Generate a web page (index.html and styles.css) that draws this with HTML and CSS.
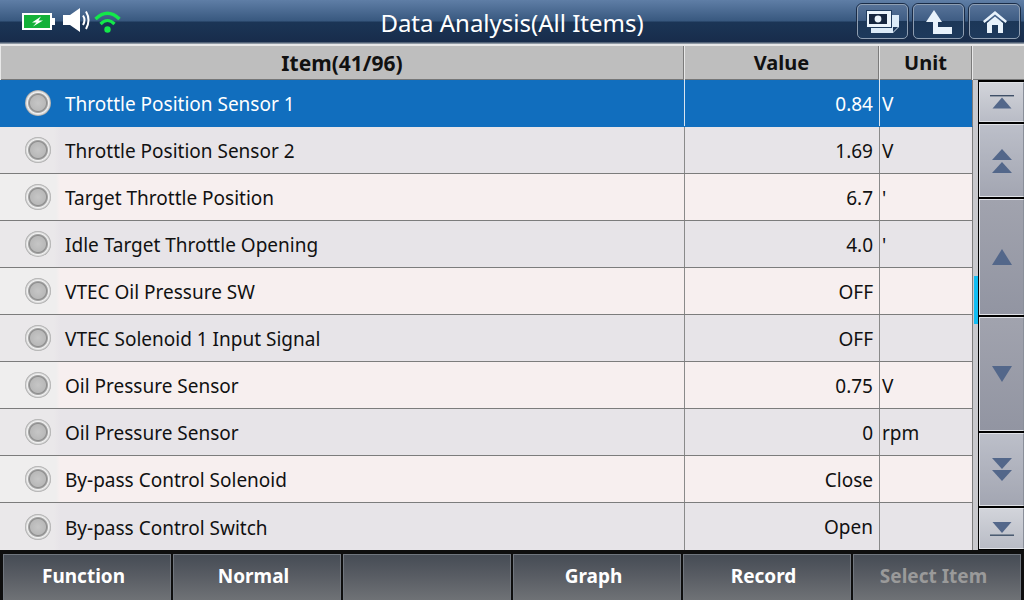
FILE: index.html
```html
<!DOCTYPE html>
<html lang="en">
<head>
<meta charset="utf-8">
<title>Data Analysis</title>
<link rel="stylesheet" href="styles.css">
</head>
<body>
<div class="screen">
  <header class="topbar">
    <div class="status">
      <svg class="ic-batt" width="33" height="17" viewBox="0 0 33 17"><rect x="1" y="1" width="28" height="15" fill="#14b13a" stroke="#fff" stroke-width="2"/><rect x="29" y="5" width="4" height="7" fill="#fff"/><path d="M19 3.5 L10 9.5 H14.5 L11 13.5 L21 7.5 H16.5 Z" fill="#fff"/></svg>
      <svg class="ic-spk" width="28" height="24" viewBox="0 0 28 24"><path d="M0 7 H7 L17 0 V24 L7 17 H0 Z" fill="#fff"/><path d="M20 7.5 Q23 12 20 17" fill="none" stroke="#fff" stroke-width="2"/><path d="M23 3.5 Q28 12 23 21" fill="none" stroke="#fff" stroke-width="2"/></svg>
      <svg class="ic-wifi" width="27" height="23" viewBox="0 0 27 23"><path d="M1.5 9 Q13.5 -2.5 25.5 9" fill="none" stroke="#14e84a" stroke-width="3.4"/><path d="M6.5 14 Q13.5 7 20.5 14" fill="none" stroke="#14e84a" stroke-width="3.2"/><circle cx="13.5" cy="19.5" r="3.2" fill="#14e84a"/></svg>
    </div>
    <h1 class="title">Data Analysis(All Items)</h1>
    <div class="actions">
      <button class="tbtn"><svg width="33" height="23" viewBox="0 0 33 23"><path d="M5 5 H33 V17 L27 23 H5 Z" fill="#dcebf8"/><path d="M27 22 V17 H32 Z" fill="#1f3a5c"/><rect x="0.5" y="0.5" width="25" height="17" fill="#eaf3fb" stroke="#1f3a5c" stroke-width="1"/><rect x="3" y="4" width="18" height="10" fill="#16263f"/><circle cx="12" cy="9" r="3.4" fill="#eaf3fb"/></svg></button>
      <button class="tbtn"><svg width="26" height="24" viewBox="0 0 26 24"><path d="M8 0 L16 12 H12 V17 H26 V24 H7 V12 H0 Z" fill="#e8f2fb"/></svg></button>
      <button class="tbtn"><svg width="24" height="22" viewBox="0 0 24 22"><path d="M12 0 L24 10 L22.5 12 L12 3.5 L1.5 12 L0 10 Z" fill="#e8f2fb"/><path d="M4 12 L12 5.5 L20 12 V22 H15 V14 H9 V22 H4 Z" fill="#e8f2fb"/></svg></button>
    </div>
  </header>

  <div class="thead">
    <div class="th th-item">Item(41/96)</div>
    <div class="th">Value</div>
    <div class="th">Unit</div>
    <div class="th"></div>
  </div>

  <div class="middle">
    <div class="rows">
      <div class="row selected"><span class="c-item"><i class="led"></i>Throttle Position Sensor 1</span><span class="c-val">0.84</span><span class="c-unit">V</span></div>
      <div class="row even"><span class="c-item"><i class="led"></i>Throttle Position Sensor 2</span><span class="c-val">1.69</span><span class="c-unit">V</span></div>
      <div class="row odd"><span class="c-item"><i class="led"></i>Target Throttle Position</span><span class="c-val">6.7</span><span class="c-unit">'</span></div>
      <div class="row even"><span class="c-item"><i class="led"></i>Idle Target Throttle Opening</span><span class="c-val">4.0</span><span class="c-unit">'</span></div>
      <div class="row odd"><span class="c-item"><i class="led"></i>VTEC Oil Pressure SW</span><span class="c-val">OFF</span><span class="c-unit"></span></div>
      <div class="row even"><span class="c-item"><i class="led"></i>VTEC Solenoid 1 Input Signal</span><span class="c-val">OFF</span><span class="c-unit"></span></div>
      <div class="row odd"><span class="c-item"><i class="led"></i>Oil Pressure Sensor</span><span class="c-val">0.75</span><span class="c-unit">V</span></div>
      <div class="row even"><span class="c-item"><i class="led"></i>Oil Pressure Sensor</span><span class="c-val">0</span><span class="c-unit">rpm</span></div>
      <div class="row odd"><span class="c-item"><i class="led"></i>By-pass Control Solenoid</span><span class="c-val">Close</span><span class="c-unit"></span></div>
      <div class="row even last"><span class="c-item"><i class="led"></i>By-pass Control Switch</span><span class="c-val">Open</span><span class="c-unit"></span></div>
    </div>
    <div class="track"><div class="thumb"></div></div>
    <div class="scroll">
      <button class="sbtn s-end light"><svg width="24" height="14" viewBox="0 0 24 14"><rect x="0" y="0" width="24" height="1.4" fill="#3f5068"/><path d="M12 2.5 L21.5 13.5 H2.5 Z" fill="#53678a"/></svg></button>
      <button class="sbtn s-dbl mid"><svg width="20" height="24" viewBox="0 0 20 24"><path d="M10 0 L20 11 H0 Z" fill="#53678a"/><path d="M10 13 L20 24 H0 Z" fill="#53678a"/></svg></button>
      <button class="sbtn s-one dark"><svg width="20" height="16" viewBox="0 0 20 16"><path d="M10 0 L20 16 H0 Z" fill="#53678a"/></svg></button>
      <button class="sbtn s-one2 dark"><svg width="20" height="16" viewBox="0 0 20 16"><path d="M0 0 H20 L10 16 Z" fill="#53678a"/></svg></button>
      <button class="sbtn s-dbl2 mid"><svg width="20" height="23" viewBox="0 0 20 23"><path d="M0 0 H20 L10 11 Z" fill="#53678a"/><path d="M0 12 H20 L10 23 Z" fill="#53678a"/></svg></button>
      <button class="sbtn s-end2 light"><svg width="24" height="14" viewBox="0 0 24 14"><path d="M2.5 0 H21.5 L12 11 Z" fill="#53678a"/><rect x="0" y="12.5" width="24" height="1.4" fill="#3f5068"/></svg></button>
    </div>
  </div>

  <footer class="bottombar">
    <button class="fbtn">Function</button>
    <button class="fbtn">Normal</button>
    <button class="fbtn"></button>
    <button class="fbtn">Graph</button>
    <button class="fbtn">Record</button>
    <button class="fbtn off">Select Item</button>
  </footer>
</div>
</body>
</html>
```
FILE: styles.css
```css
* { box-sizing: border-box; margin: 0; padding: 0; }
html, body { width: 1024px; height: 600px; overflow: hidden; }
body { font-family: "Noto Sans", "Open Sans", "DejaVu Sans", sans-serif; background: #000; }
.screen { width: 1024px; height: 600px; display: flex; flex-direction: column; }

.topbar {
  height: 44px; display: grid; grid-template-columns: 1fr auto 1fr; align-items: center;
  background: linear-gradient(#5f7ea6 0, #38587f 21px, #1b3556 22px, #182c4b 42px, #8d97a3 43px);
}
.status { display: flex; align-items: flex-start; padding-left: 22px; height: 44px; }
.ic-batt { margin-top: 12px; }
.ic-spk { margin: 7px 0 0 8px; }
.ic-wifi { margin: 9px 0 0 3px; }
.title { font-size: 24px; font-weight: 400; color: #fff; line-height: 45px; white-space: nowrap; }
.actions { display: flex; justify-content: flex-end; gap: 3px; padding: 3px 3px 0 0; align-self: start; }
.tbtn {
  width: 53px; height: 37px; border: 1px solid #1a2c47; border-radius: 6px; outline: 1px solid #8e9eb2; outline-offset: -2px;
  background: linear-gradient(#58749a 0, #3f5d84 47%, #1c3758 50%, #1e3a5c 100%);
  display: flex; align-items: center; justify-content: center;
}

.thead { height: 36px; display: grid; grid-template-columns: 684px 195px 93px 52px; background: #bebebe; border-top: 2px solid #e8e8e8; border-bottom: 1px solid #777; }
.th { font-size: 20px; font-weight: 700; color: #111; text-align: center; line-height: 34px; border-right: 1px solid #7b7b7b; border-left: 1px solid #e8e8e8; }
.th-item { font-size: 21px; }
.th:last-child { border-right: 0; }

.middle { height: 470px; display: grid; grid-template-columns: 973px 5px 46px; background: #c9c9cd; }
.rows { display: grid; grid-template-rows: repeat(10, 47px); }
.row {
  display: grid; grid-template-columns: 684px 196px 92px; grid-template-rows: minmax(0, 1fr); height: 47px;
  font-size: 19px; color: #111; line-height: 48px; border-bottom: 1px solid #7c7c7c;
  border-right: 1px solid #7c7c7c;
}
.row.even { background: #e7e4e8; }
.row.odd { background: #f7efef; }
.row.selected { background: #116ebe; color: #fff; border-bottom-color: #116ebe; }
.row.last { border-bottom: 0; }
.c-item { display: flex; align-items: center; padding: 2px 0 0 25px; white-space: nowrap; }
.even .c-item { background: linear-gradient(90deg, #eae8ea 0, #eae8ea 54px, #e7e4e8 60px); }
.odd .c-item { background: linear-gradient(90deg, #efeeee 0, #efeeee 56px, #f7efef 60px); }
.c-val { text-align: right; padding-right: 6px; border-left: 1px solid #8a8a8a; border-right: 1px solid #8a8a8a; }
.selected .c-val { border-color: #d8e4f0; }
.c-unit { padding-left: 2px; }
.led {
  width: 26px; height: 26px; margin: -2px 14px 0 0; border-radius: 50%; flex: none;
  background: radial-gradient(circle at 50% 50%, #c6c6c6 0, #b9b9b9 7.5px, #8e8e8e 8.5px, #a5a5a5 9.5px, #f1f1f1 10.5px, #dedede 11.5px, #a2a2a2 13px);
}

.track { position: relative; background: #c9c9cd; }
.thumb { position: absolute; left: 1px; top: 196px; width: 4px; height: 48px; background: #12bdf2; }
.scroll { display: flex; flex-direction: column; gap: 2px; padding-top: 2px; background: #000; border-left: 1px solid #000; }
.sbtn { display: flex; align-items: center; justify-content: center; width: 100%; border: 1px solid #dfe1e6; border-right-color: #8a8f9a; }
.s-end, .s-end2 { height: 40px; }
.s-dbl, .s-dbl2 { height: 73px; }
.s-one { height: 116px; }
.s-one2 { height: 114px; }
.s-end2 { height: 41px; }
.light { background: linear-gradient(#d2d4da, #b9bcc6); }
.mid { background: linear-gradient(#bcbfc9, #a3a6b2); }
.dark { background: linear-gradient(#a1a3ae, #9295a2); }

.bottombar { height: 50px; display: grid; grid-template-columns: repeat(6, 170px); padding: 4px 0 0 3px; background: #0e0e0e; }
.fbtn {
  height: 46px; width: 168px; border: 1px solid #70767e; border-bottom: 0; padding: 0 7px 4px 0;
  background: linear-gradient(#464c55, #585c63 45%, #6f7276);
  color: #fff; font-family: inherit; font-size: 19px; font-weight: 700;
}
.fbtn.off { color: #9a9a9a; }
```
